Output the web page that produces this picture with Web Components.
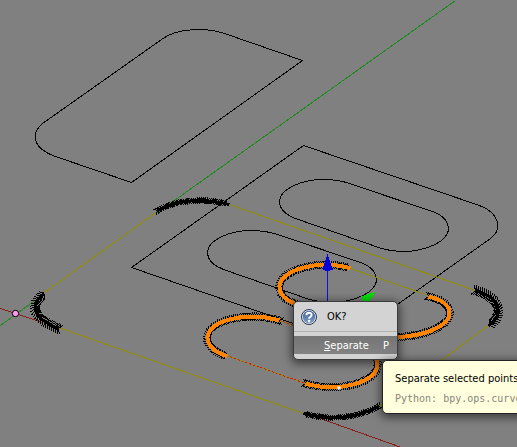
<!DOCTYPE html>
<html lang="en">
<head>
<meta charset="utf-8">
<title>3D View</title>
<style>
html, body { margin: 0; height: 100%; overflow: hidden; background: #808080; }
body { font-family: "DejaVu Sans Condensed", "DejaVu Sans", sans-serif; font-size: 11px; }
</style>
</head>
<body>
<curve-viewport>
  <confirm-popup heading="OK?"><menu-action shortcut="P"><u>S</u>eparate</menu-action></confirm-popup>
  <tool-tip>Separate selected points<span slot="code">Python: bpy.ops.curve</span></tool-tip>
</curve-viewport>

<script>
const attach = (el, html) => { el.attachShadow({ mode: "open" }).innerHTML = html; return el.shadowRoot; };

customElements.define("curve-viewport", class extends HTMLElement {
  constructor() {
    super();
    const root = attach(this, `
<style>
:host { display: block; position: relative; height: 100vh; overflow: hidden; background: #808080; }
svg { display: block; overflow: visible; }
.wire { fill: none; stroke-width: 1; shape-rendering: crispEdges; }
.black { stroke: #000; stroke-linejoin: bevel; } .edge { stroke: #918d00; }
.normals { stroke: #000; }
.core { stroke: #000; stroke-width: 3; }
.sel { stroke: #ff8500; stroke-width: 4; }
::slotted(confirm-popup) { position: absolute; left: 293px; top: 301px; z-index: 1; }
::slotted(tool-tip) { position: absolute; left: 382px; top: 360px; z-index: 2; }
</style>
<svg width="517" height="447" viewBox="0 0 517 447" aria-hidden="true">
 <defs><path id="slotTemplate" d="M346,182 L435,212 C443,216 448,222 448,228 C448,241 425,251 402,251 C394,251 388,250 381,248 L295,218 C285,214 279,208 279,201 C279,189 300,179 323,179 C332,179 339,180 346,182Z"/></defs>
 <g transform="translate(.5 .5)">
 <g class="wire">
  <path stroke="#1d8a1d" d="M455,0 L157,212 M40,296 L0,325"/>
  <path stroke="#8f1c1c" d="M0,308 L42,322 M317,417 L401,447"/>
  <g class="black">
   <path d="M131,182 L302,60 L224,33 C206,27 177,27 161,39 L42,123 C30,133 32,148 55,156Z"/>
   <path d="M303,145 L479,205 C498,212 503,228 490,238 L380,316 C362,331 335,337 310,329 L131,267Z"/>
   <use href="#slotTemplate"/>
   <use href="#slotTemplate" transform="translate(-72 51)"/>
  </g>
  <g class="edge">
   <path d="M229,204 L475,290 M488,325 L378,406 M303,413 L58,327 M44,292 L157,211"/>
   <path d="M350,268 L428,295 M279,320 L310,331 M226,355 L305,383"/>
  </g>
  <path stroke="#e01800" stroke-dasharray="2 2" d="M279,320 L310,331 M226,355 L305,383"/>
  <g class="arcs">
   <path data-t="3" d="M157,210 C178,198 206,198 229,204"/>
   <path data-t="5" d="M58,328 C30,317 30,303 44,293"/>
   <path data-t="3" d="M378,406 C355,418 329,420 303,413"/>
   <path data-t="5" d="M475,290 C502,298 503,316 488,325"/>
   <path data-s data-t="4" d="M297,304 C285,300 279,294 279,286 C279,270 318,258 350,268"/>
   <path data-s data-t="4" d="M428,296 C441,299 449,305 449,313 C449,328 410,342 372,334"/>
   <path data-s data-t="4" d="M279,320 C244,310 207,321 207,337 C207,345 213,351 227,356"/>
   <path data-s data-t="4" d="M305,383 C340,393 377,381 377,364 C377,358 374,354 368,350"/>
  </g>
 </g>
 <rect x="337" y="386" width="3" height="3" fill="#fff"/>
 <circle cx="15" cy="313" r="3.2" fill="#fb98f0" stroke="#000"/>
 <g shape-rendering="crispEdges">
  <path d="M327,270V304" stroke="#1010e0"/>
  <path d="M327,253 L332,269 Q327,272 322,269Z" fill="#0000df"/>
  <path d="M375,291 L361,296 Q361,301 368,303 L371,298Z" fill="#00e000"/>
 </g>
 </g>
</svg>
<slot></slot>`);
    for (const arc of root.querySelectorAll(".arcs path")) this.addNormals(arc);
  }
  /* Each curve carries a row of small arrowheads that show its direction. */
  addNormals(arc) {
    const selected = "s" in arc.dataset, reach = +arc.dataset.t, total = arc.getTotalLength();
    let d = "";
    for (let at = 0; at <= total; at += 2) {
      const p = arc.getPointAtLength(at), q = arc.getPointAtLength(Math.max(0, at - 1)), r = arc.getPointAtLength(Math.min(total, at + 1));
      const len = Math.hypot(r.x - q.x, r.y - q.y), tx = (r.x - q.x) / len, ty = (r.y - q.y) / len;
      for (const side of [-1, 1])
        d += `M${p.x},${p.y}L${p.x - tx * 3 - ty * side * reach},${p.y - ty * 3 + tx * side * reach}`;
    }
    const ticks = document.createElementNS("http://www.w3.org/2000/svg", "path");
    ticks.setAttribute("d", d);
    ticks.setAttribute("class", "normals");
    arc.before(ticks);
    arc.setAttribute("class", selected ? "sel" : "core");
  }
});

customElements.define("confirm-popup", class extends HTMLElement {
  connectedCallback() {
    attach(this, `
<style>
:host { display: block; box-sizing: border-box; min-width: 105px; border: 1px solid #3c3c3c; border-radius: 5px; background: #d3d3d3; box-shadow: 0 2px 8px 2px rgba(0,0,0,.5); padding-bottom: 5px; }
header { display: flex; align-items: center; gap: 10px; height: 29px; padding: 0 7px; border-bottom: 1px solid #b0b0b0; margin-bottom: 4px; color: #000; }
svg { display: block; flex: none; }
</style>
<header><svg width="16" height="16" viewBox="0 0 16 16" aria-hidden="true">
<defs><linearGradient id="g" x2="0" y2="1"><stop stop-color="#3d5f94"/><stop offset="1" stop-color="#7f9cc6"/></linearGradient></defs>
<circle cx="8" cy="8" r="7.5" fill="#e4e9f0" stroke="#26364f"/><circle cx="8" cy="8" r="6.2" fill="url(#g)"/>
<path d="M5.4,6.3 C5.4,2.9 10.7,3 10.6,6 C10.5,7.8 8.1,7.8 8.1,9.8" fill="none" stroke="#fff" stroke-width="2"/><circle cx="8.1" cy="12" r="1.2" fill="#fff"/></svg><span></span></header>
<slot></slot>`).querySelector("span").textContent = this.getAttribute("heading");
  }
});

customElements.define("menu-action", class extends HTMLElement {
  connectedCallback() {
    attach(this, `
<style>
:host { display: block; }
button { display: flex; justify-content: space-between; align-items: center; width: 100%; height: 18px; border: 0; margin: 0; padding: 0 8px 0 30px; color: #fff; font: inherit; background: linear-gradient(#757575, #828282); cursor: pointer; }
kbd { font: inherit; }
</style>
<button type="button"><span><slot></slot></span><kbd></kbd></button>`).querySelector("kbd").textContent = this.getAttribute("shortcut");
  }
});

customElements.define("tool-tip", class extends HTMLElement {
  connectedCallback() {
    this.setAttribute("role", "tooltip");
    attach(this, `
<style>
:host { display: flex; flex-direction: column; gap: 4px; box-sizing: border-box; min-width: 180px; padding: 10px 12px 6px; border: 1px solid #222; border-radius: 5px; background: #ffffde; color: #000; white-space: nowrap; box-shadow: 0 2px 8px 2px rgba(0,0,0,.5); line-height: 16px; }
.code { font-family: "DejaVu Sans Mono", monospace; font-size: 10px; color: #858579; }
</style>
<div><slot></slot></div><div class="code"><slot name="code"></slot></div>`);
  }
});
</script>
</body>
</html>
